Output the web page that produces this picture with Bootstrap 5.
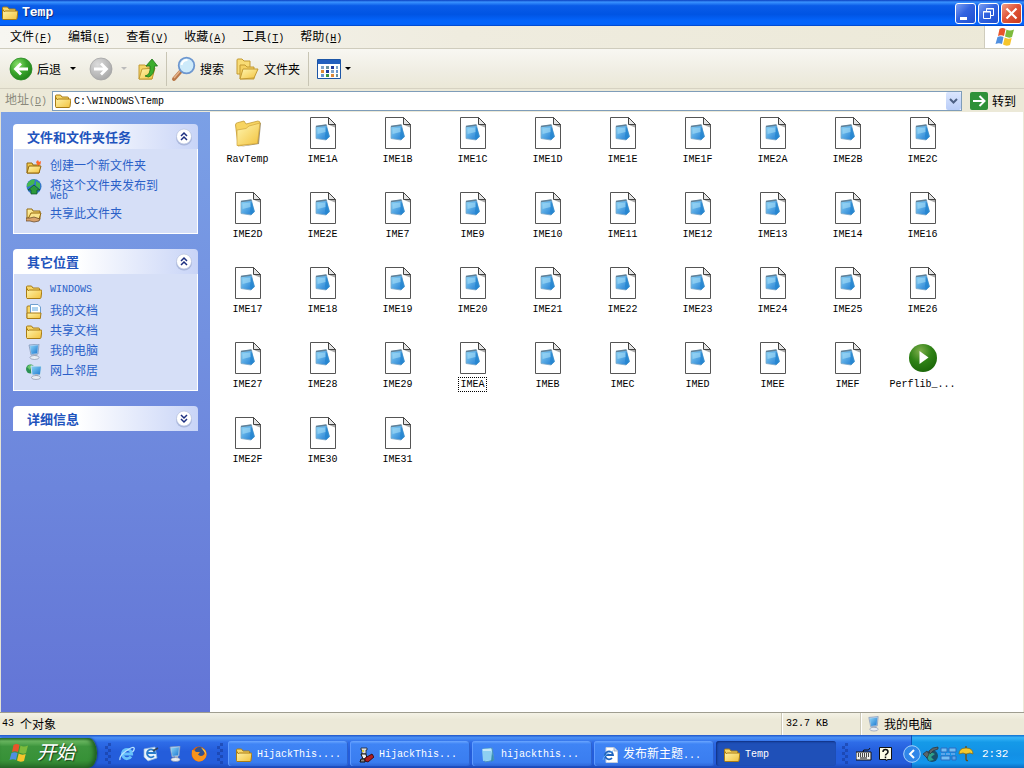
<!DOCTYPE html>
<html lang="zh-CN">
<head>
<meta charset="utf-8">
<meta name="viewport" content="width=device-width, initial-scale=1">
<title>Temp</title>
<link rel="stylesheet" href="https://cdn.jsdelivr.net/npm/bootstrap@5.3.0/dist/css/bootstrap.min.css">
<style>
body{font:12px/16px "Noto Sans CJK SC",sans-serif;color:#000;background:#ece9d8}
svg{flex:none;display:block}
button{border:0;background:none;padding:0;color:inherit;font:inherit;white-space:nowrap}
.lat{font-family:"Liberation Mono",monospace;font-size:10px}
.titlebar{height:26px;padding:0 2px 0 2px;color:#fff;background:linear-gradient(#0a3fc0,#3a93ff 8%,#0a5ce8 22%,#0054e3 55%,#0464fb 80%,#0464fb 94%,#0040c0)}
.titlebar h1{font:bold 13px/16px "Liberation Mono",monospace;text-shadow:1px 1px #0a2a80}
.winbtns{gap:2px}
.winbtn{width:21px;height:21px;border:1px solid #fff;border-radius:3px;background:linear-gradient(135deg,#7d9ff2,#3263e0 45%,#1f4fd0)}
.winbtn.close-x{background:linear-gradient(135deg,#f0a088,#e1553a 45%,#c93b1c)}
.menubar{height:23px;padding-left:2px;border-bottom:1px solid #cfccbd;background:linear-gradient(90deg,#f7f6f1,#efecdf 45%,#ece9d8)}
.menubar button{padding:0 8px}
.flagbox{width:40px;background:#fff;border-left:1px solid #cfccbd}
.toolbar{height:40px;padding-left:9px;border-bottom:1px solid #d6d2c2;background:linear-gradient(#f8f7f2,#efede2 60%,#ebe8d7)}
.vline{width:1px;height:34px;background:#c8c5b4}
.addressbar{height:23px;background:#ece9d8}
.addressbar label{width:52px;flex:none;padding-left:5px;color:#8b897c;white-space:nowrap}
.addrfield{height:20px;border:1px solid #7f9db9;background:#fff;padding:0 0 0 2px}
.addrfield input{border:0;outline:0;min-width:0;background:none;padding:2px 0 0 3px}
.dropbtn{width:15px;height:18px;border-radius:2px;background:linear-gradient(#dbe6fe,#b9cdf8)}
.tasks{width:210px;padding:12px 12px 0 12px;border-left:1px solid #e4e2d4;background:linear-gradient(#7ba0e6,#6375d6);gap:15px}
.panelhead{height:25px;padding:0 5px 0 14px;border-radius:4px 4px 0 0;background:linear-gradient(90deg,#fff 35%,#c8d4f7)}
.panelhead h2{font-size:13px;line-height:16px;font-weight:700;color:#1f54bd}
.panelbody{padding:6px 12px 10px;background:#d6dff7;border:solid #fff;border-width:0 1px 1px}
.panelbody li{min-height:20px;padding-top:4px;gap:8px}
.panelbody a{color:#2a5fc8;text-decoration:none;line-height:12px}
.panelbody a .second{display:block;line-height:12px}
.files{min-width:0;background:#fff;border-right:1px solid #ece9d8;overflow:auto}
.files li{width:75px;height:75px;padding-top:5px}
.files .lat{line-height:13px;margin-top:4px;padding:0 1px}
.picked{outline:1px dotted #000}
.statusbar{height:23px;border-top:1px solid #9f9d90;background:linear-gradient(#f4f2e6,#ece9d8 30%)}
.statusbar div{border-left:1px solid #cbc8b7;box-shadow:inset 1px 0 #fff}
.objcount{padding-left:2px}
.sizecell{width:79px;padding-left:4px}
.placecell{width:164px;padding-left:5px;gap:3px}
.taskbar{height:33px;color:#fff;background:linear-gradient(#1f55c8,#4a90f5 8%,#2e6ce8 22%,#245ddb 50%,#245ddb 85%,#1c48b5)}
.startbtn{width:97px;height:30px;padding-left:9px;border-radius:0 9px 9px 0/0 15px 15px 0;background:linear-gradient(#2f7e2f,#6cb862 10%,#3d953d 28%,#379137 75%,#2a6f2a);box-shadow:inset -3px 0 4px #1e5d20,1px 0 2px #163a8a}
.startbtn span{font-size:19px;line-height:24px;padding-bottom:4px;font-style:italic;text-shadow:1px 1px 1px #1c401c}
.grip{width:6px;height:21px;margin-top:4px;background:repeating-conic-gradient(#173c9e 0 25%,transparent 0 50%) 0 0/6px 6px;opacity:.6}
.quick{padding-left:8px;width:106px}
.wins{min-width:0;gap:2px;padding:4px 0 0 5px}
.wins button{flex:0 1 120px;min-width:0;height:25px;padding:2px 0 0 8px;gap:5px;border-radius:3px;background:linear-gradient(#6aa6ff,#3f84f5 12%,#3a7df0 85%,#2d66d8);box-shadow:inset 1px 0 #5f9bff,inset -1px 0 #2d62cf}
.wins button.active{background:#1f50b8;box-shadow:inset 1px 1px 2px #0f2f80}
.notify{gap:7px;padding:4px 19px 0 8px}
.tray{width:113px;height:33px;padding:4px 0 0 10px;border-left:1px solid #0f4fb5;background:linear-gradient(#0f6fd0,#36b4f8 8%,#159ae8 22%,#1290e6 60%,#1396ec 85%,#0c6cc2)}
.tray time{font-size:11px;padding-left:7px}
.hidebtn{position:absolute;left:-9px;top:10px}
</style>
</head>
<body class="vh-100 d-flex flex-column overflow-hidden">
<svg width="0" height="0" class="position-absolute" aria-hidden="true">
<defs>
<linearGradient id="gy" x1="0" y1="0" x2="1" y2="1"><stop offset="0" stop-color="#fff6b0"/><stop offset="1" stop-color="#f2c23e"/></linearGradient>
<linearGradient id="gb" x1="0" y1="0" x2="1" y2="1"><stop offset="0" stop-color="#8fd6f7"/><stop offset="1" stop-color="#1b78d0"/></linearGradient>
<radialGradient id="gg" cx=".35" cy=".3" r=".8"><stop offset="0" stop-color="#8be06c"/><stop offset=".5" stop-color="#3aa62c"/><stop offset="1" stop-color="#1d7d18"/></radialGradient>
<radialGradient id="gr" cx=".35" cy=".3" r=".8"><stop offset="0" stop-color="#dcdcdc"/><stop offset="1" stop-color="#a3a3a3"/></radialGradient>
<radialGradient id="gp" cx=".4" cy=".25" r=".8"><stop offset="0" stop-color="#7fae4c"/><stop offset=".5" stop-color="#2f8216"/><stop offset="1" stop-color="#1a6508"/></radialGradient>
<symbol id="folder" viewBox="0 0 16 16"><path d="M.5 13V3q0-1 1-1h4L7 4h5.500q1 0 1 1v1" fill="#f7d768" stroke="#a87b14"/><path d="M.5 13.500V4l2 3q0-1 1-1h11.500q1 0 .8 1l-.8 6.500q-.2 1-1 1h-13z" fill="url(#gy)" stroke="#a87b14"/></symbol>
<symbol id="newfolder" viewBox="0 0 16 16"><path d="M1 14V4h5l1 2h6v8z" fill="#f0c84c" stroke="#94690f"/><path d="M1 14l2-7h12l-2 7z" fill="url(#gy)" stroke="#94690f"/><path d="M10 3l2-2 1 2 2-1-.5 3.500-3 1z" fill="#ff6a2a"/></symbol>
<symbol id="globe" viewBox="0 0 16 16"><circle cx="8" cy="7.500" r="7.500" fill="#3378c8"/><path d="M1 5q3-5 8-4.500L8 5 4 7l-3 1zM10 2l4 2.500V10l-4-3z" fill="#43b850"/><path d="M8 6l6 5h-3v4H5v-4H2z" fill="#2c9a3a" stroke="#0c4e28" stroke-width=".7"/></symbol>
<symbol id="sharefolder" viewBox="0 0 16 16"><path d="M1 12V2h5l1 2h7v8z" fill="url(#gy)" stroke="#94690f"/><path d="M2 12l3-6h10l-2 6z" fill="#fbe48c" stroke="#94690f"/><path d="M0 11h4l4-1 6 2-1 2-5 1-4-1H0z" fill="#d9a36c" stroke="#5e4020" stroke-width=".7"/></symbol>
<symbol id="docs" viewBox="0 0 16 16"><path d="M1 14V3q0-1 1-1h4v12z" fill="#f7d768" stroke="#a87b14"/><path d="M4.500.5H12L14.500 3v8h-10z" fill="#fff" stroke="#6f9fd0"/><path d="M6 4h6M6 6h6" stroke="#59a4e0"/><path d="M1 14.500V9h14l-.7 5.500z" fill="url(#gy)" stroke="#a87b14"/></symbol>
<symbol id="pc" viewBox="0 0 16 16"><path d="M3 1l10-1-1 10-7 1z" fill="#b7d3f2" stroke="#7c93b4" stroke-width=".7"/><path d="M4 2l8-.8-.8 8L5.500 10z" fill="url(#gb)"/><path d="M8 10h3v3H8z" fill="#aab6c6"/><ellipse cx="8.500" cy="13.500" rx="4.500" ry="2" fill="#e8edf4" stroke="#7886a0" stroke-width=".6"/></symbol>
<symbol id="net" viewBox="0 0 16 16"><circle cx="4.500" cy="5" r="4.500" fill="#2b9154"/><path d="M1 3q3-3 5-2L4 6z" fill="#69c66a"/><path d="M5 2h10.500l-1 9H6z" fill="url(#gb)" stroke="#d5e3f2"/><path d="M9 10h3v3H9z" fill="#aab6c6"/><ellipse cx="10" cy="13.500" rx="4.500" ry="2" fill="#e8edf4" stroke="#7886a0" stroke-width=".6"/></symbol>
<symbol id="disc" viewBox="0 0 18 18"><circle cx="9" cy="9.500" r="8" fill="#8f9fc8" opacity=".6"/><circle cx="9" cy="8.500" r="7.500" fill="#fff" stroke="#b7c3e0" stroke-width=".7"/></symbol>
<symbol id="flag" viewBox="0 0 20 20"><path d="M4.500 2q3-2 6 0L9 9q-3-1.500-6 0z" fill="#e8542a"/><path d="M11.500 2.500q3 2 7.500 0L17 10q-3 1.500-7-.5z" fill="#7dbb3c"/><path d="M2.500 10q3-1.500 6 0L7 17q-3-1.500-6.500 0z" fill="#4f8fe0"/><path d="M9.700 10.500q3 2 7 .5L15 18q-4 1.500-7-.5z" fill="#f6c52c"/></symbol>
<symbol id="file" viewBox="0 0 32 32"><path d="M3.500.5h18l7 7v24h-25z" fill="#fff" stroke="#555" /><path d="M21.500.5l7 7h-7z" fill="#e4e4e4" stroke="#444"/><path d="M22 8h6v2.500z" fill="#aaa"/><path d="M9 9.500l10.500-1.500L22 20l-3 3-10-1.500z" fill="url(#gb)" stroke="#7fa9c8" stroke-width=".8"/><path d="M9 9.500L19.500 8" stroke="#5f8098" stroke-width="1.500"/><path d="M19.500 9L23 19.500l-4 3.500-1-4z" fill="#2486cf" opacity=".8"/><path d="M10.500 11.500l7.500-1 .5 4.500-8 2z" fill="#a5dcf6" opacity=".6"/></symbol>
<symbol id="bigfolder" viewBox="0 0 32 32"><path d="M7 30l20-3 2-21-1 0-3 20z" fill="#8b7d5d" opacity=".8"/><path d="M6 28L3.500 8q0-2 2-2.300L12 4l2 3 12-3 2 1L25 26 6 29z" fill="#f7d461" stroke="#c39a32" stroke-width=".8"/><path d="M5 28.500V13l9-1.500 3-2.500 11-3-2.500 20.500z" fill="url(#gy)" stroke="#d0a33a" stroke-width=".7"/></symbol>
<symbol id="play" viewBox="0 0 32 32"><circle cx="16" cy="16" r="14" fill="url(#gp)"/><path d="M12.500 9v13l9-6.500z" fill="#fff"/></symbol>
<symbol id="note" viewBox="0 0 16 16"><path d="M3 2l9-1 2 12-9 2z" fill="#a8e3f8" stroke="#4c91bd"/><path d="M2 2l9-1 1 12-9 1z" fill="#8dd0f2"/><path d="M3 3h8" stroke="#fff"/><path d="M12 4l2 9-3 2z" fill="#398fb2"/></symbol>
<symbol id="ie" viewBox="0 0 16 16"><path d="M12 10.500A4.700 4.700 0 1 1 12.700 8H4" fill="none" stroke="#68c2fb" stroke-width="2.800"/><path d="M1 14Q0 10 7 5t8-3q1 1-1.500 4" fill="none" stroke="#b5e2ff" stroke-width="1.300"/></symbol>
</defs></svg>

<header class="titlebar d-flex align-items-center">
<svg width="16" height="16"><use href="#folder"/></svg>
<h1 class="m-0 ms-1 flex-grow-1">Temp</h1>
<div class="winbtns d-flex">
<button class="winbtn" aria-label="最小化"><svg width="19" height="19"><path d="M4 13h7v3H4z" fill="#fff"/></svg></button>
<button class="winbtn" aria-label="还原"><svg width="19" height="19" fill="none" stroke="#fff"><path d="M7.500 7V4.500h7v7H12M7 5h8M4.500 7.500h7v7h-7zM4 8h8"/></svg></button>
<button class="winbtn close-x" aria-label="关闭"><svg width="19" height="19"><path d="M4.500 4.500l10 10m0-10l-10 10" stroke="#fff" stroke-width="2.200"/></svg></button>
</div>
</header>

<nav class="menubar d-flex align-items-stretch">
<button>文件<span class="lat">(<u>F</u>)</span></button><button>编辑<span class="lat">(<u>E</u>)</span></button><button>查看<span class="lat">(<u>V</u>)</span></button><button>收藏<span class="lat">(<u>A</u>)</span></button><button>工具<span class="lat">(<u>T</u>)</span></button><button>帮助<span class="lat">(<u>H</u>)</span></button>
<div class="flagbox ms-auto d-flex align-items-center justify-content-center"><svg width="20" height="20"><use href="#flag"/></svg></div>
</nav>

<div class="toolbar d-flex align-items-center">
<button class="d-flex align-items-center gap-1"><svg width="24" height="24"><circle cx="12" cy="12" r="11" fill="url(#gg)" stroke="#2a8a24" stroke-width=".8"/><path d="M19 12H7m5-5.500L6.500 12l5.500 5.500" fill="none" stroke="#fff" stroke-width="2.800"/></svg>后退</button>
<button class="px-2" aria-label="后退列表"><svg width="8" height="4"><path d="M1 0h6L4 3z"/></svg></button>
<button class="ms-1" aria-label="前进"><svg width="24" height="24"><circle cx="12" cy="12" r="11" fill="url(#gr)" stroke="#a5a5a5" stroke-width=".8"/><path d="M5 12h12m-5-5.500l5.500 5.500-5.500 5.500" fill="none" stroke="#fff" stroke-width="2.800"/></svg></button>
<button class="px-2" aria-label="前进列表"><svg width="7" height="4"><path d="M0 0h6L3 3z" fill="#bbb"/></svg></button>
<button aria-label="向上"><svg width="26" height="24"><path d="M3 22V8h6l2 2h7l-2 12z" fill="#f5d566" stroke="#c39a32"/><path d="M3 22l3-10 13-1-3 11z" fill="url(#gy)" stroke="#c39a32"/><path d="M9 19q6-1 5-10h-4l6-7 5.500 7h-3q0 9-6 11z" fill="#3bae2c" stroke="#1d7418" stroke-width=".8"/></svg></button>
<span class="vline mx-1"></span>
<button class="d-flex align-items-center gap-1"><svg width="25" height="26"><path d="M3 23l7-8" stroke="#b97848" stroke-width="4" stroke-linecap="round"/><path d="M3 22l6-7" stroke="#e5b28a" stroke-width="1.500"/><circle cx="15.500" cy="9.500" r="7.800" fill="#cdeafa" stroke="#6d97cf" stroke-width="1.800"/><path d="M10.500 9q1-5 6-5" fill="none" stroke="#fff" stroke-width="2"/></svg>搜索</button>
<button class="d-flex align-items-center gap-1 ms-2"><svg width="28" height="26"><path d="M5 18V4q0-1 1-1h4l2 2h6v13z" fill="#f8dc75" stroke="#c39a32"/><path d="M8 23V9h5l2 2h7v12z" fill="#f5d160" stroke="#c39a32"/><path d="M8 23l3-10h15l-4 9z" fill="url(#gy)" stroke="#c39a32"/></svg>文件夹</button>
<span class="vline mx-2"></span>
<button class="d-flex align-items-center gap-1" aria-label="查看方式"><svg width="24" height="20"><path d="M.5.5h23v19H.5z" fill="#fff" stroke="#1d56a6"/><path d="M1 1h22v4H1z" fill="#2460be"/><path d="M4 7h3v3H4zM14 11h3v3h-3zM19 7h2v3h-2z" fill="#7fa3c9"/><path d="M9 7h3v3H9zM19 15h2v3h-2z" fill="#6b93a0"/><path d="M14 7h3v3h-3zM9 11h3v3H9z" fill="#213c9c"/><path d="M4 11h3v3H4zM14 15h3v3h-3z" fill="#df8a38"/><path d="M4 15h3v3H4zM19 11h2v3h-2z" fill="#6794cf"/><path d="M9 15h3v3H9z" fill="#3d9440"/></svg><svg width="7" height="4"><path d="M0 0h6L3 3z"/></svg></button>
</div>

<div class="addressbar d-flex align-items-center">
<label for="addr">地址<span class="lat">(<u>D</u>)</span></label>
<div class="addrfield d-flex align-items-center flex-grow-1"><svg width="16" height="16"><use href="#folder"/></svg><input id="addr" class="lat flex-grow-1" type="text" value="C:\WINDOWS\Temp"><button class="dropbtn d-flex align-items-center justify-content-center" aria-label="地址列表"><svg width="9" height="6"><path d="M1 1l3.500 3.500L8 1" fill="none" stroke="#4d6185" stroke-width="2"/></svg></button></div>
<button class="d-flex align-items-center gap-1 mx-2"><svg width="18" height="18"><rect width="18" height="18" rx="2" fill="#2f9138"/><path d="M3 9h11M9.500 4l5 5-5 5" fill="none" stroke="#fff" stroke-width="2"/></svg>转到</button>
</div>

<main class="flex-grow-1 d-flex overflow-hidden">
<aside class="tasks d-flex flex-column flex-shrink-0">
<section><div class="panelhead d-flex align-items-center justify-content-between"><h2 class="m-0">文件和文件夹任务</h2><button aria-label="折叠"><svg width="18" height="18"><use href="#disc"/><path d="M6 8l3-3 3 3M6 12l3-3 3 3" fill="none" stroke="#1c2f80" stroke-width="1.500"/></svg></button></div>
<ul class="panelbody list-unstyled m-0">
<li class="d-flex"><svg width="16" height="16"><use href="#newfolder"/></svg><a href="#">创建一个新文件夹</a></li>
<li class="d-flex"><svg width="16" height="16"><use href="#globe"/></svg><a href="#">将这个文件夹发布到<span class="lat second">Web</span></a></li>
<li class="d-flex"><svg width="16" height="16"><use href="#sharefolder"/></svg><a href="#">共享此文件夹</a></li>
</ul></section>
<section><div class="panelhead d-flex align-items-center justify-content-between"><h2 class="m-0">其它位置</h2><button aria-label="折叠"><svg width="18" height="18"><use href="#disc"/><path d="M6 8l3-3 3 3M6 12l3-3 3 3" fill="none" stroke="#1c2f80" stroke-width="1.500"/></svg></button></div>
<ul class="panelbody list-unstyled m-0">
<li class="d-flex"><svg width="16" height="16"><use href="#folder"/></svg><a class="lat" href="#">WINDOWS</a></li>
<li class="d-flex"><svg width="16" height="16"><use href="#docs"/></svg><a href="#">我的文档</a></li>
<li class="d-flex"><svg width="16" height="16"><use href="#folder"/></svg><a href="#">共享文档</a></li>
<li class="d-flex"><svg width="16" height="16"><use href="#pc"/></svg><a href="#">我的电脑</a></li>
<li class="d-flex"><svg width="16" height="16"><use href="#net"/></svg><a href="#">网上邻居</a></li>
</ul></section>
<section><div class="panelhead d-flex align-items-center justify-content-between"><h2 class="m-0">详细信息</h2><button aria-label="展开"><svg width="18" height="18"><use href="#disc"/><path d="M6 5l3 3 3-3M6 9l3 3 3-3" fill="none" stroke="#1c2f80" stroke-width="1.500"/></svg></button></div></section>
</aside>
<ul id="files" class="files list-unstyled m-0 flex-grow-1 d-flex flex-wrap align-content-start"></ul>
</main>

<footer class="statusbar d-flex align-items-stretch">
<span class="objcount flex-grow-1 d-flex align-items-center"><span class="lat">43&nbsp;</span>个对象</span>
<div class="sizecell lat d-flex align-items-center">32.7 KB</div>
<div class="placecell d-flex align-items-center"><svg width="15" height="16"><use href="#pc"/></svg>我的电脑</div>
</footer>

<div class="taskbar d-flex align-items-center">
<button class="startbtn d-flex align-items-center align-self-end gap-2"><svg width="20" height="20"><use href="#flag"/></svg><span>开始</span></button>
<span class="grip ms-2"></span>
<div class="quick d-flex align-items-center gap-2 pt-1">
<a href="#" aria-label="Internet Explorer"><svg width="16" height="16"><use href="#ie"/></svg></a>
<a href="#" aria-label="Outlook Express"><svg width="16" height="16"><path d="M1 3l11-2 2 11-9 3-4-4z" fill="#e9f3fd" stroke="#8fb7dc" stroke-width=".7"/><path d="M11 10a4 4 0 1 1 1-3H5" fill="none" stroke="#287bc9" stroke-width="1.800"/><path d="M10 5l5-3" stroke="#345" stroke-width="1.500"/></svg></a>
<a href="#" aria-label="显示桌面"><svg width="16" height="16"><use href="#pc"/></svg></a>
<a href="#" aria-label="Firefox"><svg width="16" height="16"><circle cx="8" cy="8" r="7.500" fill="#e66000"/><circle cx="8.500" cy="6" r="5" fill="#31528f"/><path d="M1 4q3 0 4 2l4 0-2 2.500q2 2.500 6 .5 2-2 .5-6 3 4 1.500 8-3 5-8 4.500Q0 14 1 4z" fill="#f7941d"/><path d="M10 1.500q5 2 5 7l-2-3z" fill="#ffd04a"/></svg></a>
</div>
<span class="grip"></span>
<div class="wins d-flex flex-grow-1 align-items-center">
<button class="d-flex align-items-center"><svg width="16" height="16"><use href="#folder"/></svg><span class="lat">HijackThis....</span></button>
<button class="d-flex align-items-center"><svg width="16" height="16"><path d="M3 1h6v2H8v4H4V3H3z" fill="#ddd" stroke="#111" stroke-width=".7"/><path d="M3 7h5l1 5H5z" fill="#f3f3f3" stroke="#111"/><path d="M3 12h4v3H2z" fill="#888" stroke="#111"/><path d="M7 11l7-4 2 3-6 5-3-1z" fill="#ad1f22" stroke="#300" stroke-width=".8"/><path d="M4 3h2v2H4z" fill="#d6ca42"/></svg><span class="lat">HijackThis...</span></button>
<button class="d-flex align-items-center"><svg width="16" height="16"><use href="#note"/></svg><span class="lat">hijackthis...</span></button>
<button class="d-flex align-items-center"><svg width="16" height="16"><path d="M4 .5h8l3.500 3.500v11.500H4z" fill="#fff" stroke="#c4cede"/><path d="M12 .5V4h3.500" fill="#d9e2ee" stroke="#879bb8" stroke-width=".7"/><path d="M10 11a4 4 0 1 1 1-3H4" fill="none" stroke="#1d63bd" stroke-width="1.800"/><path d="M1 13q0-5 10-9" fill="none" stroke="#63aaf0"/></svg><span>发布新主题<span class="lat">...</span></span></button>
<button class="active d-flex align-items-center"><svg width="16" height="16"><use href="#folder"/></svg><span class="lat">Temp</span></button>
</div>
<span class="grip"></span>
<div class="notify d-flex align-items-center">
<svg width="16" height="14"><path d="M0 5h15v8H0z" fill="#eee" stroke="#111"/><path d="M2 7h12M2 9h12" stroke="#111" stroke-width="1.300" stroke-dasharray="1 1"/><path d="M4 11h7" stroke="#111"/><path d="M7 5q0-3 3-2t4-2" fill="none" stroke="#111"/></svg>
<button aria-label="帮助"><svg width="13" height="14"><path d="M.5.5h12v12H9l-2 1V12.500H.5z" fill="#fffde8" stroke="#111"/><path d="M4 5q0-2.500 2.500-2.500T9 5q0 1-1.300 1.800-1.200.7-1.200 1.700M6.500 9.500v1.800" fill="none" stroke="#111" stroke-width="1.500"/></svg></button>
</div>
<div class="tray position-relative d-flex align-items-center flex-shrink-0">
<button class="hidebtn" aria-label="隐藏图标"><svg width="18" height="18"><circle cx="9" cy="9" r="8.300" fill="#2f86e8" stroke="#a8d3fa"/><path d="M11 5L7 9l4 4" fill="none" stroke="#fff" stroke-width="2"/></svg></button>
<svg width="18" height="18"><circle cx="10" cy="11" r="6" fill="#184f6b"/><path d="M4 9q5-3 9 0l-4 3 3 3-5 1z" fill="#2fa08a"/><path d="M7 6q3-4 9-4v2l-5 2-3 3zM1 9l4-3 2 3-2 4z" fill="#59666c" stroke="#26323a" stroke-width=".7"/></svg>
<svg width="17" height="18"><path d="M1 3h6v4H1zM9 3h7v4H9zM1 11h9v4H1z" fill="#74bdf3" stroke="#2a6cc0"/><path d="M1 9h15" stroke="#5aa5ea" stroke-width="2" stroke-dasharray="4 1"/><path d="M12 11h4v4h-4z" fill="#5aa5ea" stroke="#2a6cc0"/></svg>
<svg width="18" height="18"><path d="M2 9q0-6 7-6t7 6l-3-1-4 1-3-1z" fill="#f4c92e" stroke="#8a6a0c" stroke-width=".7"/><path d="M9 1v2M9 9v5q0 2 2 1.500" fill="none" stroke="#6b4d10" stroke-width="1.300"/></svg>
<time class="lat">2:32</time>
</div>
</div>

<script src="https://cdn.jsdelivr.net/npm/bootstrap@5.3.0/dist/js/bootstrap.bundle.min.js"></script>
<script>
const names = ('RavTemp IME1A IME1B IME1C IME1D IME1E IME1F IME2A IME2B IME2C IME2D IME2E IME7 IME9 IME10 IME11 IME12 IME13 IME14 IME16 ' +
'IME17 IME18 IME19 IME20 IME21 IME22 IME23 IME24 IME25 IME26 IME27 IME28 IME29 IMEA IMEB IMEC IMED IMEE IMEF Perflib_... IME2F IME30 IME31').split(' ');
document.getElementById('files').innerHTML = names.map(n => {
  const icon = n === 'RavTemp' ? 'bigfolder' : n.startsWith('Perf') ? 'play' : 'file';
  return `<li class="d-flex flex-column align-items-center"><svg width="32" height="32"><use href="#${icon}"/></svg><span class="lat${n === 'IMEA' ? ' picked' : ''}">${n}</span></li>`;
}).join('');
</script>
</body>
</html>
